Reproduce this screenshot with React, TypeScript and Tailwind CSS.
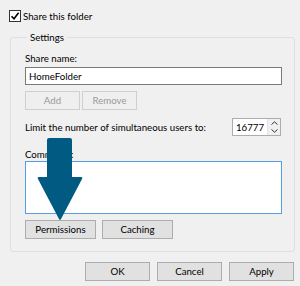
import React from 'react';

const font = { fontFamily: 'Lato, "Noto Sans", "Liberation Sans", sans-serif' };

function Btn({ label, className = '' }: { label: string; className?: string }) {
  return (
    <div
      className={`flex items-center justify-center h-[19px] bg-[#e1e1e1] border border-[#adadad] text-[9.7px] text-black ${className}`}
    >
      {label}
    </div>
  );
}

function DisabledBtn({ label, className = '' }: { label: string; className?: string }) {
  return (
    <div
      className={`flex items-center justify-center h-[19px] bg-[#efefef] border border-[#cfcfcf] text-[9.7px] text-[#9a9a9a] ${className}`}
    >
      {label}
    </div>
  );
}

export default function App() {
  return (
    <div className="relative w-[300px] h-[286px] bg-[#f0f0f0] overflow-hidden text-[9.7px] text-black leading-[13px]" style={font}>
      {/* Share checkbox */}
      <div className="flex items-center pt-[10px] pl-[9px] h-[22px]">
        <div className="w-[12px] h-[12px] border border-[#333] bg-white flex items-center justify-center">
          <svg width="10" height="10" viewBox="0 0 10 10">
            <path d="M1.5 5.2 L4 7.8 L8.6 1.8" fill="none" stroke="#000" strokeWidth="1.6" />
          </svg>
        </div>
        <span className="ml-[2px]">Share this folder</span>
      </div>

      {/* Settings group */}
      <fieldset className="ml-[10px] mt-[9px] w-[285px] h-[221px] border border-[#dcdfe3] rounded-[3px] pl-[14px] pr-[12px]">
        <legend className="ml-[2px] px-[3px] leading-[13px]">Settings</legend>
        <div className="mt-[8px]">Share name:</div>
        <div className="mt-[2px] h-[18px] w-[257px] bg-white border border-[#7a7a7a] flex items-center px-[3px]">
          HomeFolder
        </div>
        <div className="flex gap-[2px] mt-[6px]">
          <DisabledBtn label="Add" className="w-[55px]" />
          <DisabledBtn label="Remove" className="w-[55px]" />
        </div>
        <div className="flex items-center mt-[8px] h-[18px]">
          <span className="w-[207px] whitespace-nowrap">Limit the number of simultaneous users to:</span>
          <div className="flex h-[18px] w-[49px] bg-white border border-[#abadb3]">
            <div className="w-[34px] whitespace-nowrap pl-[3px] flex items-center">16777</div>
            <div className="flex-1 flex flex-col bg-[#f0f0f0] border-l border-[#e3e3e3]">
              <div className="flex-1 flex items-center justify-center">
                <svg width="7" height="4" viewBox="0 0 7 4">
                  <path d="M0.5 3.5 L3.5 0.8 L6.5 3.5" fill="none" stroke="#333" strokeWidth="1" />
                </svg>
              </div>
              <div className="flex-1 flex items-center justify-center">
                <svg width="7" height="4" viewBox="0 0 7 4">
                  <path d="M0.5 0.5 L3.5 3.2 L6.5 0.5" fill="none" stroke="#333" strokeWidth="1" />
                </svg>
              </div>
            </div>
          </div>
        </div>
        <div className="mt-[12px]">Comments:</div>
        <div className="h-[53px] w-[257px] bg-white border border-[#569de5]" />
        <div className="flex gap-[6px] mt-[6px]">
          <Btn label="Permissions" className="w-[71px]" />
          <Btn label="Caching" className="w-[71px]" />
        </div>
      </fieldset>

      {/* Dialog buttons */}
      <div className="flex justify-end gap-[7px] pr-[6px] mt-[10px]">
        <Btn label="OK" className="w-[65px] border-[#0078d7]" />
        <Btn label="Cancel" className="w-[65px]" />
        <Btn label="Apply" className="w-[65px]" />
      </div>

      {/* Pointer arrow overlay */}
      <svg className="absolute left-0 top-0" width="300" height="286" viewBox="0 0 300 286">
        <path
          d="M49 138 L70 138 Q72 138 72 140 L72 177 L81 177 Q83 177 82 179 L61 219 Q60 221 59 219 L38 179 Q37 177 39 177 L47 177 L47 140 Q47 138 49 138 Z"
          fill="#005a82"
        />
      </svg>
    </div>
  );
}
